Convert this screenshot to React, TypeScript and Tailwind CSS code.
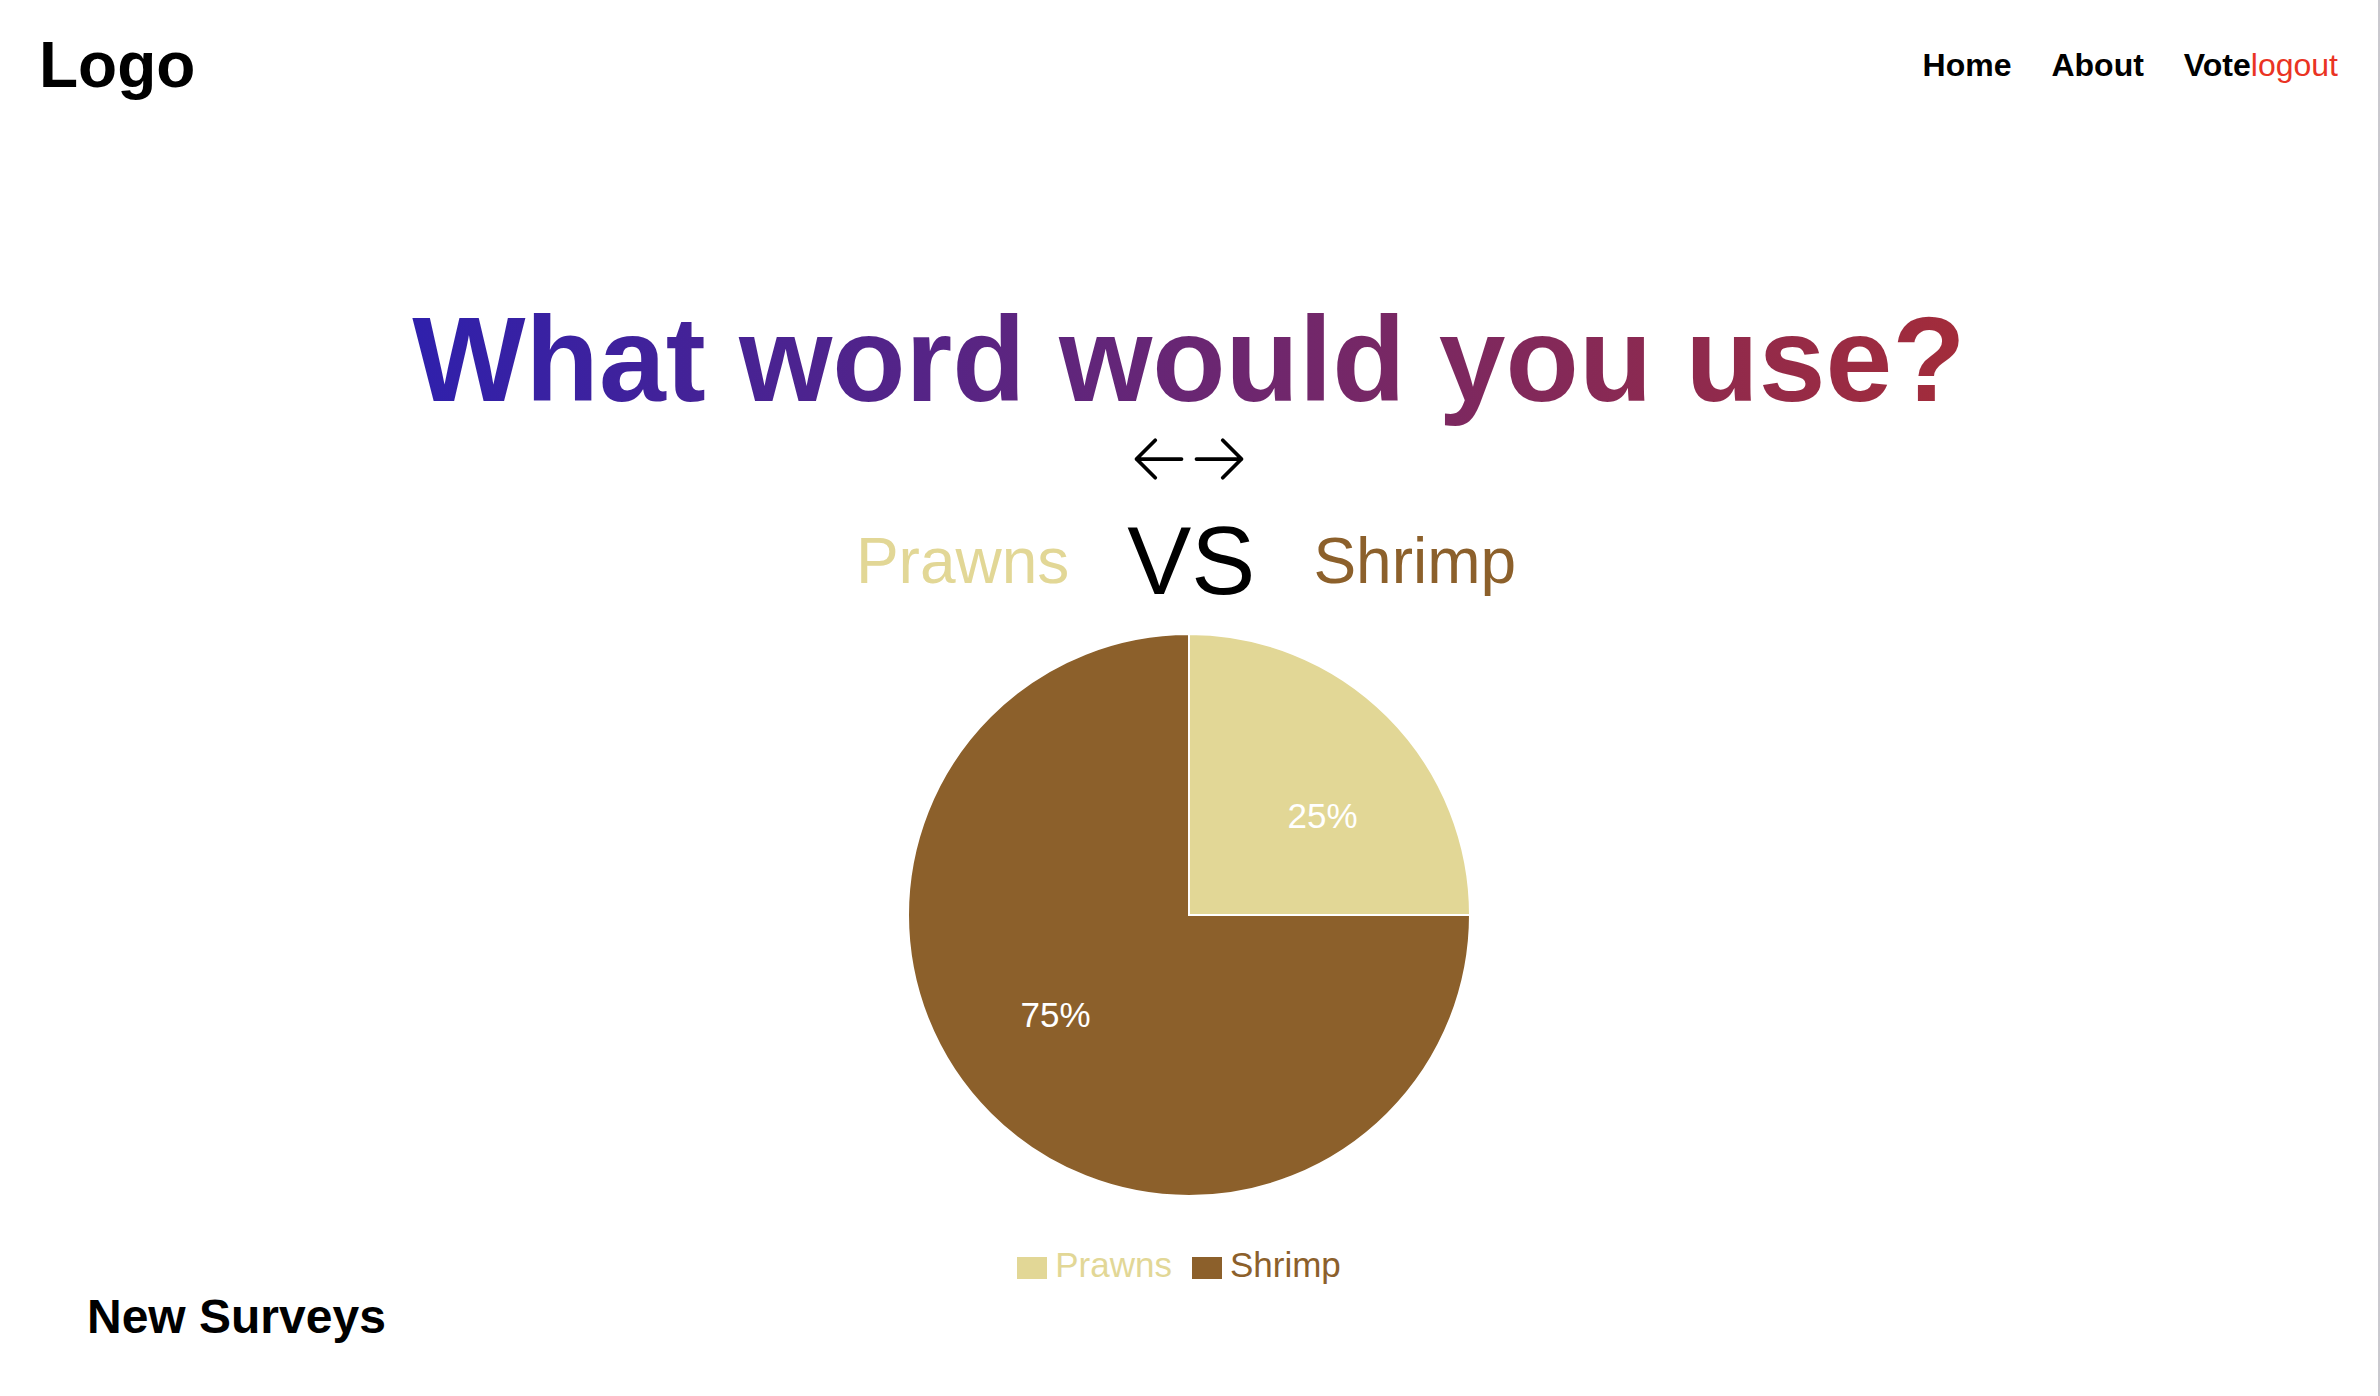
const options = [
  { name: "Prawns", share: 25, text: "text-[#e2d796]", fill: "fill-[#e2d796]", bg: "bg-[#e2d796]" },
  { name: "Shrimp", share: 75, text: "text-[#8c602b]", fill: "fill-[#8c602b]", bg: "bg-[#8c602b]" },
];

const links = ["Home", "About", "Vote"];

function Arrow({ d }: { d: string }) {
  return (
    <svg viewBox="0 0 24 24" className="size-[60px]" fill="none" stroke="currentColor" strokeWidth="1.5" strokeLinecap="round" strokeLinejoin="round" aria-hidden="true">
      <path d={d} />
    </svg>
  );
}

function PieChart() {
  const r = 281;
  let start = 0;
  const slices = options.map((o) => {
    const a0 = (start / 100) * 2 * Math.PI;
    start += o.share;
    const a1 = (start / 100) * 2 * Math.PI;
    const mid = (a0 + a1) / 2;
    const x0 = r * Math.sin(a0), y0 = -r * Math.cos(a0);
    const x1 = r * Math.sin(a1), y1 = -r * Math.cos(a1);
    return {
      ...o,
      d: `M${x0} ${y0}A${r} ${r} 0 ${o.share > 50 ? 1 : 0} 1 ${x1} ${y1}L0 0Z`,
      lx: r * 0.475 * Math.sign(Math.sin(mid)),
      ly: -r * 0.355 * Math.sign(Math.cos(mid)),
    };
  });
  return (
    <svg viewBox="-282 -282 564 564" className="size-[564px]" role="img" aria-label="Survey results">
      {slices.map((s) => (
        <path key={s.name} d={s.d} className={s.fill} stroke="#fff" strokeWidth="2" />
      ))}
      {slices.map((s) => (
        <text key={s.name} x={s.lx} y={s.ly} textAnchor="middle" dominantBaseline="central" className="fill-white text-[35px]">
          {s.share}%
        </text>
      ))}
    </svg>
  );
}

export default function App() {
  return (
    <div className="min-h-screen border-r-2 border-[#c9c8ce] bg-white font-['Liberation_Sans',Arial,sans-serif] text-black">
      <header className="flex items-center justify-between pt-[29px] pr-10 pb-7 pl-[39px]">
        <a href="#" className="text-[64px] leading-[72px] font-bold">Logo</a>
        <nav className="flex items-center text-[32px] leading-10">
          <ul className="flex gap-10 font-bold">
            {links.map((l) => (
              <li key={l}><a href="#">{l}</a></li>
            ))}
          </ul>
          <button type="button" className="text-[#ea3323]">logout</button>
        </nav>
      </header>

      <main>
        <section className="flex flex-col items-center pt-40">
          <h1 className="bg-linear-to-r/srgb from-[#2f20ac] to-[#a32c3a] bg-clip-text py-1 text-[120px] leading-[132px] font-bold text-transparent">
            What word would you use?
          </h1>
          <div className="flex">
            <Arrow d="M10.5 19.5L3 12m0 0l7.5-7.5M3 12h18" />
            <Arrow d="M13.5 4.5L21 12m0 0l-7.5 7.5M21 12H3" />
          </div>
          <div className="mt-6 flex items-center gap-[58px] pr-1.5 text-[64px] leading-[96px]">
            <span className={options[0].text}>{options[0].name}</span>
            <span className="text-[96px]">VS</span>
            <span className={options[1].text}>{options[1].name}</span>
          </div>
          <div className="mt-6">
            <PieChart />
          </div>
          <ul className="mt-12 flex text-[35px] leading-10">
            {options.map((o) => (
              <li key={o.name} className="mr-5 flex items-center gap-2">
                <span className={`mt-1.5 h-[22px] w-[30px] ${o.bg}`} />
                <span className={o.text}>{o.name}</span>
              </li>
            ))}
          </ul>
        </section>
        <section className="mt-1 px-[87px]">
          <h2 className="text-5xl leading-[56px] font-bold">New Surveys</h2>
        </section>
      </main>
    </div>
  );
}
